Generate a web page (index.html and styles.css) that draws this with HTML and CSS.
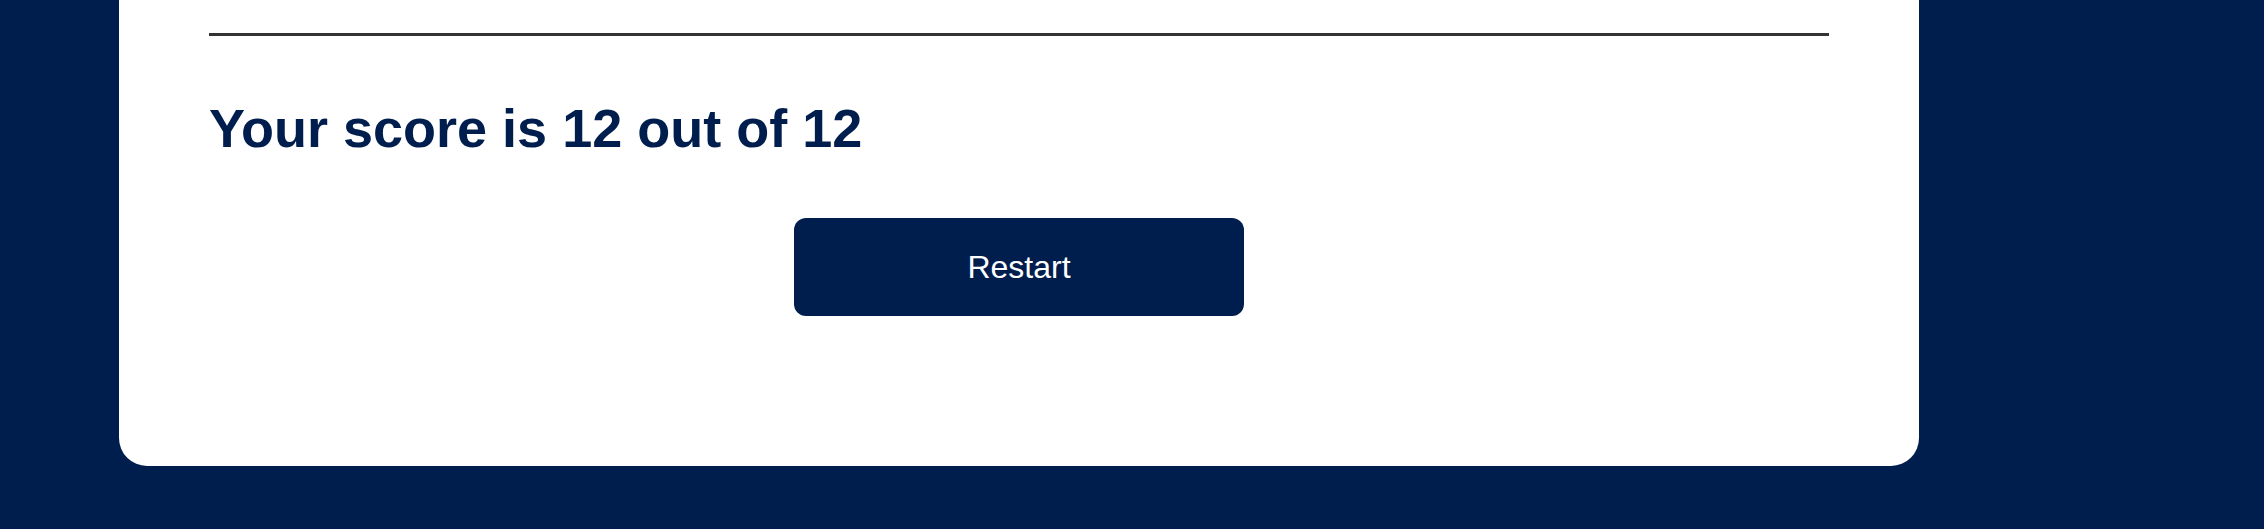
FILE: index.html
```html
<!DOCTYPE html>
<html lang="en">
<head>
<meta charset="utf-8">
<title>Quiz result</title>
<link rel="stylesheet" href="styles.css">
</head>
<body>
<div class="page">
  <main class="card">
    <hr class="divider">
    <h2 class="score">Your score is 12 out of 12</h2>
    <div class="actions">
      <button class="restart" type="button">Restart</button>
    </div>
  </main>
</div>
</body>
</html>
```
FILE: styles.css
```css
html, body {
  margin: 0;
  padding: 0;
  background: #001e4d;
  height: 529px;
  overflow: hidden;
}
.page {
  display: flex;
  padding-left: 119px;
}
.card {
  width: 1800px;
  box-sizing: border-box;
  background: #ffffff;
  border-radius: 0 0 28px 28px;
  padding: 33px 90px 150px 90px;
  display: flex;
  flex-direction: column;
}
.divider {
  margin: 0;
  border: 0;
  height: 3px;
  background: #333333;
}
.score {
  margin: 60px 0 0 0;
  font-family: "Liberation Sans", Arial, sans-serif;
  font-weight: 700;
  font-size: 54px;
  line-height: 64px;
  color: #001e4d;
}
.actions {
  display: flex;
  justify-content: center;
  margin-top: 58px;
}
.restart {
  width: 450px;
  height: 98px;
  border: 0;
  border-radius: 12px;
  background: #001e4d;
  color: #ffffff;
  font-family: "Liberation Sans", Arial, sans-serif;
  font-size: 32px;
  cursor: pointer;
}
```
